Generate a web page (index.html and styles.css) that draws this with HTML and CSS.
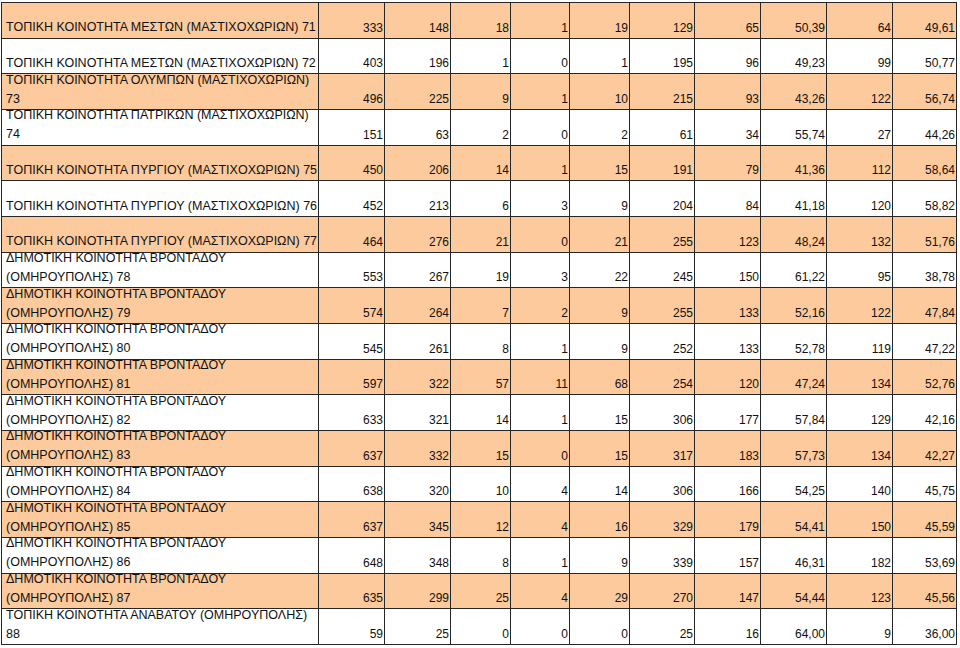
FILE: index.html
```html
<!DOCTYPE html>
<html lang="el">
<head>
<meta charset="utf-8">
<title>Αποτελέσματα</title>
<link rel="stylesheet" href="styles.css">
</head>
<body>
<div class="sheet">
  <div class="row odd"><div class="c name">ΤΟΠΙΚΗ ΚΟΙΝΟΤΗΤΑ ΜΕΣΤΩΝ (ΜΑΣΤΙΧΟΧΩΡΙΩΝ) 71</div><div class="c">333</div><div class="c">148</div><div class="c">18</div><div class="c">1</div><div class="c">19</div><div class="c">129</div><div class="c">65</div><div class="c">50,39</div><div class="c">64</div><div class="c">49,61</div></div>
  <div class="row"><div class="c name">ΤΟΠΙΚΗ ΚΟΙΝΟΤΗΤΑ ΜΕΣΤΩΝ (ΜΑΣΤΙΧΟΧΩΡΙΩΝ) 72</div><div class="c">403</div><div class="c">196</div><div class="c">1</div><div class="c">0</div><div class="c">1</div><div class="c">195</div><div class="c">96</div><div class="c">49,23</div><div class="c">99</div><div class="c">50,77</div></div>
  <div class="row odd"><div class="c name">ΤΟΠΙΚΗ ΚΟΙΝΟΤΗΤΑ ΟΛΥΜΠΩΝ (ΜΑΣΤΙΧΟΧΩΡΙΩΝ)<br>73</div><div class="c">496</div><div class="c">225</div><div class="c">9</div><div class="c">1</div><div class="c">10</div><div class="c">215</div><div class="c">93</div><div class="c">43,26</div><div class="c">122</div><div class="c">56,74</div></div>
  <div class="row"><div class="c name">ΤΟΠΙΚΗ ΚΟΙΝΟΤΗΤΑ ΠΑΤΡΙΚΩΝ (ΜΑΣΤΙΧΟΧΩΡΙΩΝ)<br>74</div><div class="c">151</div><div class="c">63</div><div class="c">2</div><div class="c">0</div><div class="c">2</div><div class="c">61</div><div class="c">34</div><div class="c">55,74</div><div class="c">27</div><div class="c">44,26</div></div>
  <div class="row odd"><div class="c name">ΤΟΠΙΚΗ ΚΟΙΝΟΤΗΤΑ ΠΥΡΓΙΟΥ (ΜΑΣΤΙΧΟΧΩΡΙΩΝ) 75</div><div class="c">450</div><div class="c">206</div><div class="c">14</div><div class="c">1</div><div class="c">15</div><div class="c">191</div><div class="c">79</div><div class="c">41,36</div><div class="c">112</div><div class="c">58,64</div></div>
  <div class="row"><div class="c name">ΤΟΠΙΚΗ ΚΟΙΝΟΤΗΤΑ ΠΥΡΓΙΟΥ (ΜΑΣΤΙΧΟΧΩΡΙΩΝ) 76</div><div class="c">452</div><div class="c">213</div><div class="c">6</div><div class="c">3</div><div class="c">9</div><div class="c">204</div><div class="c">84</div><div class="c">41,18</div><div class="c">120</div><div class="c">58,82</div></div>
  <div class="row odd"><div class="c name">ΤΟΠΙΚΗ ΚΟΙΝΟΤΗΤΑ ΠΥΡΓΙΟΥ (ΜΑΣΤΙΧΟΧΩΡΙΩΝ) 77</div><div class="c">464</div><div class="c">276</div><div class="c">21</div><div class="c">0</div><div class="c">21</div><div class="c">255</div><div class="c">123</div><div class="c">48,24</div><div class="c">132</div><div class="c">51,76</div></div>
  <div class="row"><div class="c name">ΔΗΜΟΤΙΚΗ ΚΟΙΝΟΤΗΤΑ ΒΡΟΝΤΑΔΟΥ<br>(ΟΜΗΡΟΥΠΟΛΗΣ) 78</div><div class="c">553</div><div class="c">267</div><div class="c">19</div><div class="c">3</div><div class="c">22</div><div class="c">245</div><div class="c">150</div><div class="c">61,22</div><div class="c">95</div><div class="c">38,78</div></div>
  <div class="row odd"><div class="c name">ΔΗΜΟΤΙΚΗ ΚΟΙΝΟΤΗΤΑ ΒΡΟΝΤΑΔΟΥ<br>(ΟΜΗΡΟΥΠΟΛΗΣ) 79</div><div class="c">574</div><div class="c">264</div><div class="c">7</div><div class="c">2</div><div class="c">9</div><div class="c">255</div><div class="c">133</div><div class="c">52,16</div><div class="c">122</div><div class="c">47,84</div></div>
  <div class="row"><div class="c name">ΔΗΜΟΤΙΚΗ ΚΟΙΝΟΤΗΤΑ ΒΡΟΝΤΑΔΟΥ<br>(ΟΜΗΡΟΥΠΟΛΗΣ) 80</div><div class="c">545</div><div class="c">261</div><div class="c">8</div><div class="c">1</div><div class="c">9</div><div class="c">252</div><div class="c">133</div><div class="c">52,78</div><div class="c">119</div><div class="c">47,22</div></div>
  <div class="row odd"><div class="c name">ΔΗΜΟΤΙΚΗ ΚΟΙΝΟΤΗΤΑ ΒΡΟΝΤΑΔΟΥ<br>(ΟΜΗΡΟΥΠΟΛΗΣ) 81</div><div class="c">597</div><div class="c">322</div><div class="c">57</div><div class="c">11</div><div class="c">68</div><div class="c">254</div><div class="c">120</div><div class="c">47,24</div><div class="c">134</div><div class="c">52,76</div></div>
  <div class="row"><div class="c name">ΔΗΜΟΤΙΚΗ ΚΟΙΝΟΤΗΤΑ ΒΡΟΝΤΑΔΟΥ<br>(ΟΜΗΡΟΥΠΟΛΗΣ) 82</div><div class="c">633</div><div class="c">321</div><div class="c">14</div><div class="c">1</div><div class="c">15</div><div class="c">306</div><div class="c">177</div><div class="c">57,84</div><div class="c">129</div><div class="c">42,16</div></div>
  <div class="row odd"><div class="c name">ΔΗΜΟΤΙΚΗ ΚΟΙΝΟΤΗΤΑ ΒΡΟΝΤΑΔΟΥ<br>(ΟΜΗΡΟΥΠΟΛΗΣ) 83</div><div class="c">637</div><div class="c">332</div><div class="c">15</div><div class="c">0</div><div class="c">15</div><div class="c">317</div><div class="c">183</div><div class="c">57,73</div><div class="c">134</div><div class="c">42,27</div></div>
  <div class="row"><div class="c name">ΔΗΜΟΤΙΚΗ ΚΟΙΝΟΤΗΤΑ ΒΡΟΝΤΑΔΟΥ<br>(ΟΜΗΡΟΥΠΟΛΗΣ) 84</div><div class="c">638</div><div class="c">320</div><div class="c">10</div><div class="c">4</div><div class="c">14</div><div class="c">306</div><div class="c">166</div><div class="c">54,25</div><div class="c">140</div><div class="c">45,75</div></div>
  <div class="row odd"><div class="c name">ΔΗΜΟΤΙΚΗ ΚΟΙΝΟΤΗΤΑ ΒΡΟΝΤΑΔΟΥ<br>(ΟΜΗΡΟΥΠΟΛΗΣ) 85</div><div class="c">637</div><div class="c">345</div><div class="c">12</div><div class="c">4</div><div class="c">16</div><div class="c">329</div><div class="c">179</div><div class="c">54,41</div><div class="c">150</div><div class="c">45,59</div></div>
  <div class="row"><div class="c name">ΔΗΜΟΤΙΚΗ ΚΟΙΝΟΤΗΤΑ ΒΡΟΝΤΑΔΟΥ<br>(ΟΜΗΡΟΥΠΟΛΗΣ) 86</div><div class="c">648</div><div class="c">348</div><div class="c">8</div><div class="c">1</div><div class="c">9</div><div class="c">339</div><div class="c">157</div><div class="c">46,31</div><div class="c">182</div><div class="c">53,69</div></div>
  <div class="row odd"><div class="c name">ΔΗΜΟΤΙΚΗ ΚΟΙΝΟΤΗΤΑ ΒΡΟΝΤΑΔΟΥ<br>(ΟΜΗΡΟΥΠΟΛΗΣ) 87</div><div class="c">635</div><div class="c">299</div><div class="c">25</div><div class="c">4</div><div class="c">29</div><div class="c">270</div><div class="c">147</div><div class="c">54,44</div><div class="c">123</div><div class="c">45,56</div></div>
  <div class="row"><div class="c name">ΤΟΠΙΚΗ ΚΟΙΝΟΤΗΤΑ ΑΝΑΒΑΤΟΥ (ΟΜΗΡΟΥΠΟΛΗΣ)<br>88</div><div class="c">59</div><div class="c">25</div><div class="c">0</div><div class="c">0</div><div class="c">0</div><div class="c">25</div><div class="c">16</div><div class="c">64,00</div><div class="c">9</div><div class="c">36,00</div></div>
</div>
</body>
</html>
```
FILE: styles.css
```css
html, body {
  margin: 0;
  padding: 0;
  background: #ffffff;
}
body {
  padding: 2px 0 0 1px;
  font-family: "Liberation Sans", Arial, sans-serif;
  font-size: 12px;
  color: #111111;
}
.sheet {
  width: 956px;
  height: 643px;
  box-sizing: border-box;
  padding: 1px;
  background: #262626;
  display: grid;
  grid-template-columns: 316px 65px 65px 59px 58px 59px 64px 65px 65px 65px 63px;
  grid-template-rows: repeat(18, minmax(0, 1fr));
  gap: 1px;
}
.row {
  display: contents;
}
.c {
  box-sizing: border-box;
  background: #ffffff;
  display: flex;
  flex-direction: column;
  justify-content: flex-end;
  align-items: flex-end;
  text-align: right;
  line-height: 20px;
  padding: 0 1px 0 2px;
  min-height: 0;
  min-width: 0;
  white-space: nowrap;
}
.row.odd .c {
  background: #fcca9c;
}
.c.name {
  align-items: flex-start;
  text-align: left;
  padding-left: 4px;
  font-size: 12.5px;
  line-height: 19px;
  padding-bottom: 0.5px;
}
```
